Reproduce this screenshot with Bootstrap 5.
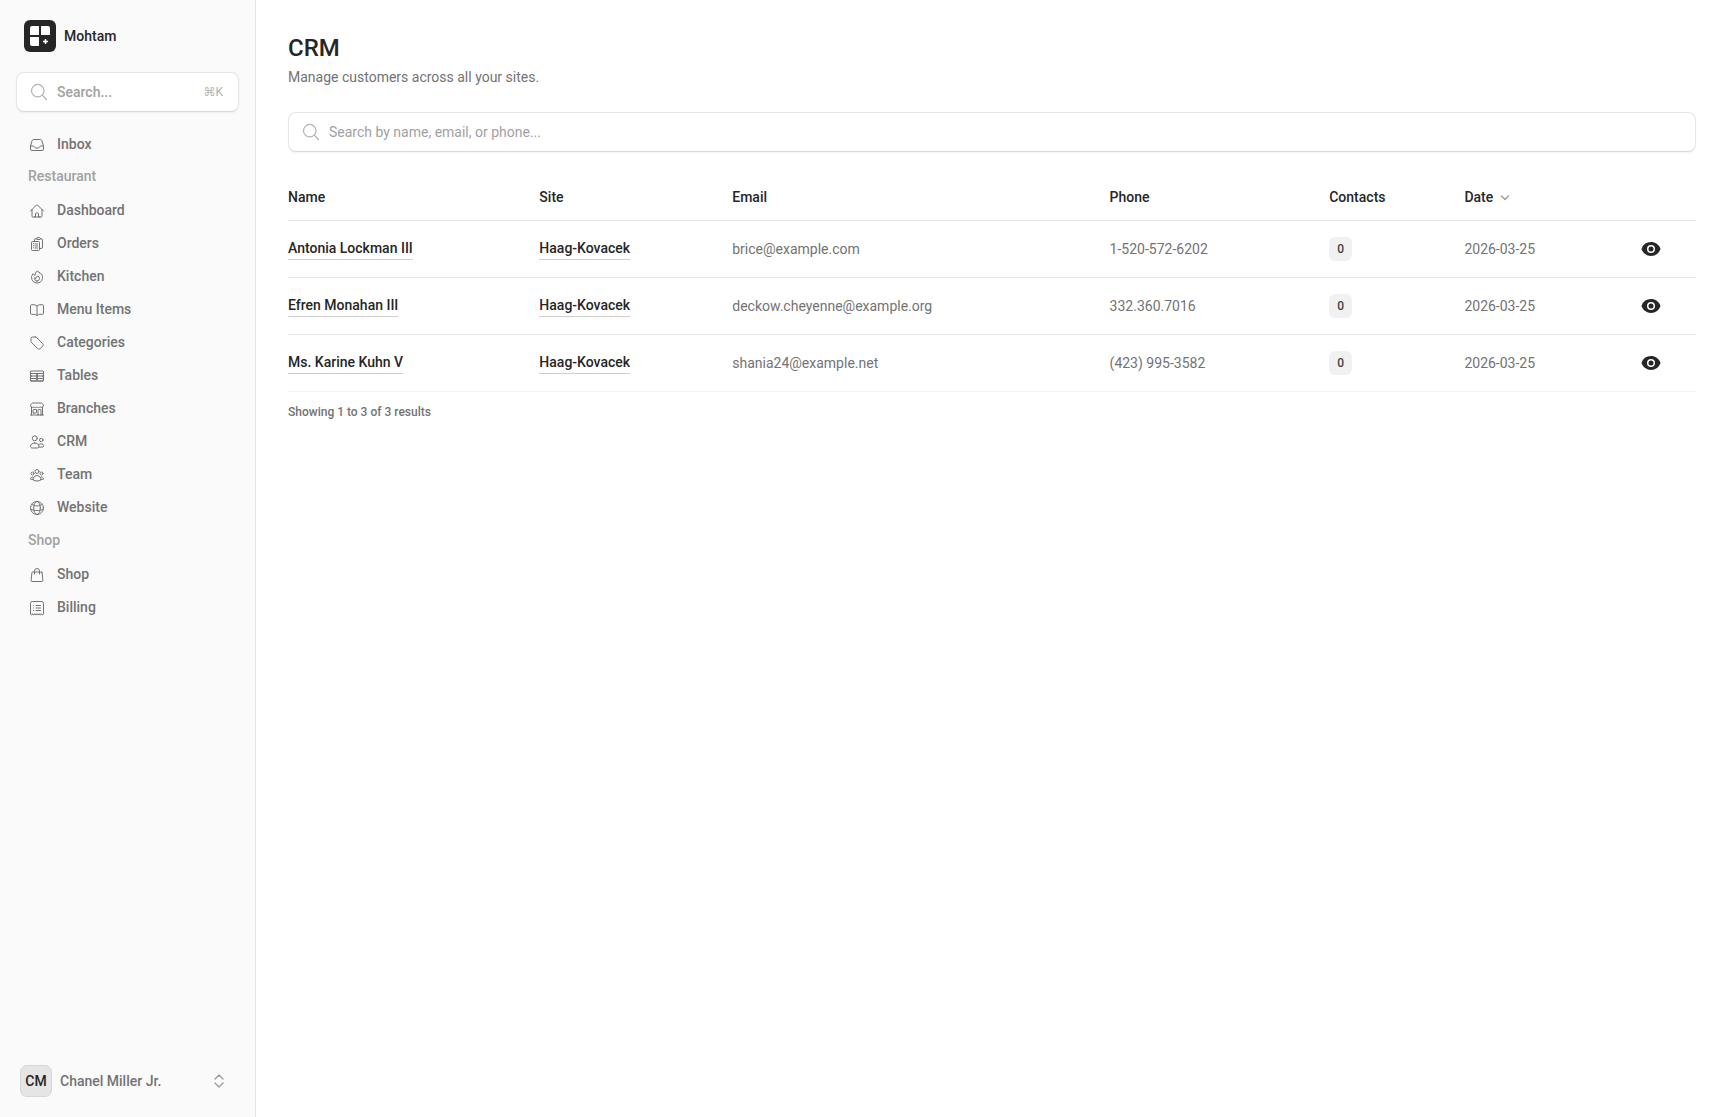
<!DOCTYPE html>
<html lang="en">
<head>
<meta charset="utf-8">
<meta name="viewport" content="width=device-width, initial-scale=1">
<title>CRM - Mohtam</title>
<link href="https://cdn.jsdelivr.net/npm/bootstrap@5.3.0/dist/css/bootstrap.min.css" rel="stylesheet">
<style>
  :root { --ink: #262626; --muted: #737373; --faint: #a1a1a1; --line: #e5e5e5; }
  body { font-family: Roboto, "Noto Sans", sans-serif; font-size: 14px; line-height: 20px; color: var(--ink); background: #fff; }
  svg { display: block; flex-shrink: 0; }
  .stroke-icon { fill: none; stroke: currentColor; stroke-width: 1.5; stroke-linecap: round; stroke-linejoin: round; }
  .app-sidebar { width: 256px; background: #fafafa; border-right: 1px solid var(--line); }
  .brand-link { color: var(--ink); height: 32px; margin: 4px 8px 20px; }
  .search-box { height: 40px; border: 1px solid var(--line); border-bottom-color: #d9d9d9; border-radius: 8px; background: #fff; color: var(--faint); box-shadow: 0 1px 2px rgba(0,0,0,.05); padding: 0 15px 0 12px; gap: 8px; }
  .search-box input { color: var(--ink); outline: 0; }
  .search-box input::placeholder { color: var(--faint); opacity: 1; }
  .search-box svg { color: #b3b3b3; }
  .quick-search { margin-bottom: 16px; }
  .quick-search kbd { font: 400 12px/20px Roboto, "DejaVu Sans", sans-serif; background: none; color: #b3b3b3; padding: 0; }
  .side-link { height: 32px; padding: 0 13px; gap: 12px; color: var(--muted); border-radius: 8px; }
  .side-link:hover { background: #f0f0f0; color: var(--ink); }
  .side-link svg { margin-top: 2px; }
  .side-label { padding: 6px 12px; color: var(--faint); }
  .side-items { gap: 1px; padding-top: 2px; padding-bottom: 1px; }
  .user-button { padding: 4px; gap: 8px; color: var(--muted); border-radius: 8px; font-size: 14px; line-height: 20px; font-weight: 500; }
  .user-initials { width: 32px; height: 32px; border: 1px solid #d6d6d6; border-radius: 7px; background: var(--line); color: var(--ink); }
  .app-main { padding: 32px; min-width: 0; }
  .page-title { font-size: 24px; line-height: 32px; margin-bottom: 3px; }
  .page-intro { margin-bottom: 25px; }
  .text-soft { color: var(--muted); }
  .crm-table { --bs-table-bg: transparent; table-layout: fixed; margin: 24px 0 0; color: var(--muted); border-color: var(--line); }
  .crm-table > :not(caption) > * > * { padding: 0 12px; height: 57px; vertical-align: middle; border-bottom: 1px solid var(--line); }
  .crm-table > thead > tr > th { height: 44px; padding-bottom: 1px; font-weight: 500; color: var(--ink); }
  .crm-table > :not(caption) > * > :first-child { padding-left: 0; }
  .crm-table > tbody > tr:last-child > td { border-bottom-color: #f3f3f3; }
  .row-link { display: inline-block; color: var(--ink); border-bottom: 1px solid #cfcfcf; line-height: 22px; }
  .count-pill { display: inline-block; min-width: 23px; height: 24px; padding: 2px 8px; border-radius: 6px; background: #f1f1f1; color: #404040; font-size: 12px; vertical-align: middle; }
  .view-button { color: var(--ink); width: 32px; height: 32px; }
  .results-note { font-size: 12px; line-height: 16px; margin-top: 12px; }
</style>
</head>
<body>
<svg class="d-none" aria-hidden="true">
  <symbol id="icon-eye" viewBox="0 0 20 20"><path d="M10 12.5a2.5 2.5 0 1 0 0-5 2.5 2.5 0 0 0 0 5Z"/><path fill-rule="evenodd" d="M.664 10.59a1.651 1.651 0 0 1 0-1.186A10.004 10.004 0 0 1 10 3c4.257 0 7.893 2.66 9.336 6.41.147.381.146.804 0 1.186A10.004 10.004 0 0 1 10 17c-4.257 0-7.893-2.66-9.336-6.41ZM14 10a4 4 0 1 1-8 0 4 4 0 0 1 8 0Z"/></symbol>
  <symbol id="icon-search" viewBox="0 0 24 24"><path d="m21 21-5.197-5.197m0 0A7.5 7.5 0 1 0 5.196 5.196a7.5 7.5 0 0 0 10.607 10.607Z"/></symbol>
</svg>
<div class="d-flex min-vh-100">
  <aside class="app-sidebar d-flex flex-column flex-shrink-0 p-3 fw-medium">
    <a href="#" class="brand-link d-flex align-items-center gap-2 text-decoration-none">
      <svg width="32" height="32" viewBox="0 0 32 32" aria-hidden="true">
        <rect width="32" height="32" rx="6" fill="#262626"/>
        <g fill="#fff"><path d="M8 6h7v9H6V8a2 2 0 0 1 2-2ZM17 6h7a2 2 0 0 1 2 2v7h-9ZM6 17h9v9H8a2 2 0 0 1-2-2ZM21.5 19l.8 1.7 1.7.8-1.7.8-.8 1.7-.8-1.7-1.7-.8 1.7-.8Z"/><path d="M20.8 19h1.4v5h-1.4zM19 20.8h5v1.4h-5z"/></g>
      </svg>
      <span>Mohtam</span>
    </a>
    <div class="search-box quick-search d-flex align-items-center">
      <svg class="stroke-icon" width="20" height="20"><use href="#icon-search"/></svg>
      <input type="search" class="border-0 bg-transparent p-0 flex-grow-1 w-50 fw-medium" placeholder="Search..." aria-label="Search">
      <kbd>⌘K</kbd>
    </div>
    <nav class="d-flex flex-column" aria-label="Main">
      <a href="#" class="side-link d-flex align-items-center text-decoration-none"><svg class="stroke-icon" width="16" height="16" viewBox="0 0 24 24"><path d="M2.25 13.5h3.86a2.25 2.25 0 0 1 2.012 1.244l.256.512a2.25 2.25 0 0 0 2.013 1.244h3.218a2.25 2.25 0 0 0 2.013-1.244l.256-.512a2.25 2.25 0 0 1 2.013-1.244h3.859m-19.5.338V18a2.25 2.25 0 0 0 2.25 2.25h15A2.25 2.25 0 0 0 21.75 18v-4.162c0-.224-.034-.447-.1-.661L19.24 5.338a2.25 2.25 0 0 0-2.15-1.588H6.911a2.25 2.25 0 0 0-2.15 1.588L2.35 13.177a2.25 2.25 0 0 0-.1.661Z"/></svg><span>Inbox</span></a>
      <div class="side-label">Restaurant</div>
      <div class="side-items d-flex flex-column">
        <a href="#" class="side-link d-flex align-items-center text-decoration-none"><svg class="stroke-icon" width="16" height="16" viewBox="0 0 24 24"><path d="m2.25 12 8.954-8.955c.44-.439 1.152-.439 1.591 0L21.75 12M4.5 9.75v10.125c0 .621.504 1.125 1.125 1.125H9.75v-4.875c0-.621.504-1.125 1.125-1.125h2.25c.621 0 1.125.504 1.125 1.125V21h4.125c.621 0 1.125-.504 1.125-1.125V9.75M8.25 21h8.25"/></svg><span>Dashboard</span></a>
        <a href="#" class="side-link d-flex align-items-center text-decoration-none"><svg class="stroke-icon" width="16" height="16" viewBox="0 0 24 24"><path d="M9 12h3.75M9 15h3.75M9 18h3.75m3 .75H18a2.25 2.25 0 0 0 2.25-2.25V6.108c0-1.135-.845-2.098-1.976-2.192a48.424 48.424 0 0 0-1.123-.08m-5.801 0c-.065.21-.1.433-.1.664 0 .414.336.75.75.75h4.5a.75.75 0 0 0 .75-.75 2.25 2.25 0 0 0-.1-.664m-5.8 0A2.251 2.251 0 0 1 13.5 2.25H15c1.012 0 1.867.668 2.15 1.586m-5.8 0c-.376.023-.75.05-1.124.08C9.095 4.01 8.25 4.973 8.25 6.108V8.25m0 0H4.875c-.621 0-1.125.504-1.125 1.125v11.25c0 .621.504 1.125 1.125 1.125h9.75c.621 0 1.125-.504 1.125-1.125V9.375c0-.621-.504-1.125-1.125-1.125H8.25ZM6.75 12h.008v.008H6.75V12Zm0 3h.008v.008H6.75V15Zm0 3h.008v.008H6.75V18Z"/></svg><span>Orders</span></a>
        <a href="#" class="side-link d-flex align-items-center text-decoration-none"><svg class="stroke-icon" width="16" height="16" viewBox="0 0 24 24"><path d="M15.362 5.214A8.252 8.252 0 0 1 12 21 8.25 8.25 0 0 1 6.038 7.047 8.287 8.287 0 0 0 9 9.601a8.983 8.983 0 0 1 3.361-6.867 8.21 8.21 0 0 0 3 2.48Z"/><path d="M12 18a3.75 3.75 0 0 0 .495-7.468 5.99 5.99 0 0 0-1.925 3.547 5.975 5.975 0 0 1-2.133-1.001A3.75 3.75 0 0 0 12 18Z"/></svg><span>Kitchen</span></a>
        <a href="#" class="side-link d-flex align-items-center text-decoration-none"><svg class="stroke-icon" width="16" height="16" viewBox="0 0 24 24"><path d="M12 5.6C10.500 4.500 8.500 4.100 6 4.100H3.750A1.500 1.500 0 0 0 2.250 5.600V17a1.500 1.500 0 0 0 1.500 1.500H8c1.700 0 3 .6 4 1.800M12 5.600c1.500-1.100 3.500-1.500 6-1.500h2.250a1.500 1.500 0 0 1 1.500 1.500V17a1.500 1.500 0 0 1-1.500 1.500H16c-1.700 0-3 .6-4 1.800M12 5.600v14.700"/></svg><span>Menu Items</span></a>
        <a href="#" class="side-link d-flex align-items-center text-decoration-none"><svg class="stroke-icon" width="16" height="16" viewBox="0 0 24 24"><path d="M9.568 3H5.25A2.25 2.25 0 0 0 3 5.25v4.318c0 .597.237 1.17.659 1.591l9.581 9.581c.699.699 1.78.872 2.607.33a18.095 18.095 0 0 0 5.223-5.223c.542-.827.369-1.908-.33-2.607L11.16 3.66A2.25 2.25 0 0 0 9.568 3Z"/></svg><span>Categories</span></a>
        <a href="#" class="side-link d-flex align-items-center text-decoration-none"><svg class="stroke-icon" width="16" height="16" viewBox="0 0 24 24"><path d="M3.375 19.5h17.25m-17.25 0a1.125 1.125 0 0 1-1.125-1.125M3.375 19.5h7.5c.621 0 1.125-.504 1.125-1.125m-9.75 0V5.625m0 12.75v-1.5c0-.621.504-1.125 1.125-1.125m18.375 2.625V5.625m0 12.75c0 .621-.504 1.125-1.125 1.125m1.125-1.125v-1.5c0-.621-.504-1.125-1.125-1.125m0 3.75h-7.5A1.125 1.125 0 0 1 12 18.375m9.75-12.75c0-.621-.504-1.125-1.125-1.125H3.375c-.621 0-1.125.504-1.125 1.125m19.5 0v1.5c0 .621-.504 1.125-1.125 1.125M2.25 5.625v1.5c0 .621.504 1.125 1.125 1.125m0 0h17.25m-17.25 0h7.5c.621 0 1.125.504 1.125 1.125M3.375 8.25c-.621 0-1.125.504-1.125 1.125v1.5c0 .621.504 1.125 1.125 1.125m17.25-3.75h-7.5c-.621 0-1.125.504-1.125 1.125m8.625-1.125c.621 0 1.125.504 1.125 1.125v1.5c0 .621-.504 1.125-1.125 1.125m-17.25 0h7.5m-7.5 0c-.621 0-1.125.504-1.125 1.125v1.5c0 .621.504 1.125 1.125 1.125M12 10.875v-1.5m0 1.5c0 .621-.504 1.125-1.125 1.125M12 10.875c0 .621.504 1.125 1.125 1.125m-2.25 0c.621 0 1.125.504 1.125 1.125M13.125 12h7.5m-7.5 0c-.621 0-1.125.504-1.125 1.125M20.625 12c.621 0 1.125.504 1.125 1.125v1.5c0 .621-.504 1.125-1.125 1.125m-17.25 0h7.5M12 14.625v-1.5m0 1.5c0 .621-.504 1.125-1.125 1.125M12 14.625c0 .621.504 1.125 1.125 1.125m-2.25 0c.621 0 1.125.504 1.125 1.125m0 1.5v-1.5m0 0c0-.621.504-1.125 1.125-1.125m0 0h7.5"/></svg><span>Tables</span></a>
        <a href="#" class="side-link d-flex align-items-center text-decoration-none"><svg class="stroke-icon" width="16" height="16" viewBox="0 0 24 24"><path d="M13.5 21v-7.5a.75.75 0 0 1 .75-.75h3a.75.75 0 0 1 .75.75V21m-4.5 0H2.36m11.14 0H18m0 0h3.64m-1.39 0V9.349M3.75 21V9.349m0 0a3.001 3.001 0 0 0 3.75-.615A2.993 2.993 0 0 0 9.75 9.75c.896 0 1.7-.393 2.25-1.016a2.993 2.993 0 0 0 2.25 1.016c.896 0 1.7-.393 2.25-1.015a3.001 3.001 0 0 0 3.75.614m-16.5 0a3.004 3.004 0 0 1-.621-4.72l1.189-1.19A1.5 1.5 0 0 1 5.378 3h13.243a1.5 1.5 0 0 1 1.06.44l1.19 1.189a3 3 0 0 1-.621 4.72M6.75 18h3.75a.75.75 0 0 0 .75-.75V13.5a.75.75 0 0 0-.75-.75H6.75a.75.75 0 0 0-.75.75v3.75c0 .414.336.75.75.75Z"/></svg><span>Branches</span></a>
        <a href="#" class="side-link d-flex align-items-center text-decoration-none"><svg class="stroke-icon" width="16" height="16" viewBox="0 0 24 24"><path d="M12.4 6.5a3.75 3.75 0 1 1-7.500 0 3.750 3.750 0 0 1 7.500 0ZM21 9a2.600 2.600 0 1 1-5.200 0A2.600 2.600 0 0 1 21 9ZM8.600 13.500c-3.600 0-6.350 2.200-6.350 5 0 1.500 1 2.500 2.600 2.500h7.600c1.600 0 2.550-1 2.550-2.500 0-2.800-2.800-5-6.400-5ZM14.500 15.800c1-.7 2.300-1 3.600-1 2.200 0 3.900 1.300 3.900 3 0 1.100-.8 1.900-2 1.900h-5"/></svg><span>CRM</span></a>
        <a href="#" class="side-link d-flex align-items-center text-decoration-none"><svg class="stroke-icon" width="16" height="16" viewBox="0 0 24 24"><path d="M18 18.72a9.094 9.094 0 0 0 3.741-.479 3 3 0 0 0-4.682-2.72m.94 3.198.001.031c0 .225-.012.447-.037.666A11.944 11.944 0 0 1 12 21c-2.17 0-4.207-.576-5.963-1.584A6.062 6.062 0 0 1 6 18.719m12 0a5.971 5.971 0 0 0-.941-3.197m0 0A5.995 5.995 0 0 0 12 12.75a5.995 5.995 0 0 0-5.058 2.772m0 0a3 3 0 0 0-4.681 2.72 8.986 8.986 0 0 0 3.74.477m.94-3.197a5.971 5.971 0 0 0-.94 3.197M15 6.75a3 3 0 1 1-6 0 3 3 0 0 1 6 0Zm6 3a2.25 2.25 0 1 1-4.5 0 2.25 2.25 0 0 1 4.5 0Zm-13.5 0a2.25 2.25 0 1 1-4.5 0 2.25 2.25 0 0 1 4.5 0Z"/></svg><span>Team</span></a>
        <a href="#" class="side-link d-flex align-items-center text-decoration-none"><svg class="stroke-icon" width="16" height="16" viewBox="0 0 24 24"><circle cx="12" cy="12" r="9.75"/><ellipse cx="12" cy="12" rx="5" ry="9.75"/><path d="M4.500 6.500C6.500 8 9 8.800 12 8.800s5.500-.8 7.500-2.300M2.600 14c2.700 1.200 6 1.800 9.400 1.800s6.700-.6 9.400-1.800"/></svg><span>Website</span></a>
      </div>
      <div class="side-label">Shop</div>
      <div class="side-items d-flex flex-column">
        <a href="#" class="side-link d-flex align-items-center text-decoration-none"><svg class="stroke-icon" width="16" height="16" viewBox="0 0 24 24"><path d="M15.75 10.5V6a3.75 3.75 0 1 0-7.5 0v4.5m11.356-1.993 1.263 12c.07.665-.45 1.243-1.119 1.243H4.25a1.125 1.125 0 0 1-1.12-1.243l1.264-12A1.125 1.125 0 0 1 5.513 7.5h12.974c.576 0 1.059.435 1.119 1.007Z"/></svg><span>Shop</span></a>
        <a href="#" class="side-link d-flex align-items-center text-decoration-none"><svg class="stroke-icon" width="16" height="16" viewBox="0 0 24 24"><path d="M2.25 20.5V5.25a3 3 0 0 1 3-3h13.5a3 3 0 0 1 3 3V20.5a1.6 1.6 0 0 1-3.25 0 1.6 1.6 0 0 1-3.25 0 1.6 1.6 0 0 1-3.25 0 1.6 1.6 0 0 1-3.25 0 1.6 1.6 0 0 1-3.25 0 1.6 1.6 0 0 1-3.25 0M10.5 8.25h6.75M10.5 12h6.75M10.5 15.75h6.75M6.75 8.25h.1M6.75 12h.1M6.75 15.75h.1"/></svg><span>Billing</span></a>
      </div>
    </nav>
    <button type="button" class="user-button btn border-0 d-flex align-items-center mt-auto w-100">
      <span class="user-initials d-flex align-items-center justify-content-center">CM</span>
      <span class="flex-grow-1 text-start">Chanel Miller Jr.</span>
      <svg class="stroke-icon me-2" width="16" height="16" viewBox="0 0 16 16" color="#a1a1a1" aria-hidden="true"><path d="m4 6 4-4 4 4M4 10l4 4 4-4"/></svg>
    </button>
  </aside>

  <main class="app-main flex-grow-1">
    <h1 class="page-title fw-medium">CRM</h1>
    <p class="page-intro text-soft">Manage customers across all your sites.</p>
    <div class="search-box d-flex align-items-center">
      <svg class="stroke-icon" width="20" height="20"><use href="#icon-search"/></svg>
      <input type="search" class="border-0 bg-transparent p-0 flex-grow-1" placeholder="Search by name, email, or phone..." aria-label="Search customers">
    </div>
    <table class="table crm-table">
      <colgroup><col style="width:17%"><col style="width:13.7%"><col style="width:26.8%"><col style="width:15.6%"><col style="width:9.6%"><col style="width:12.1%"><col></colgroup>
      <thead>
        <tr><th scope="col">Name</th><th scope="col">Site</th><th scope="col">Email</th><th scope="col">Phone</th><th scope="col">Contacts</th>
          <th scope="col"><button type="button" class="border-0 bg-transparent p-0 fw-medium d-flex align-items-center gap-1 text-reset">Date <svg class="stroke-icon" width="16" height="16" viewBox="0 0 16 16" color="#a1a1a1"><path d="m4.5 7 3.5 3.5L11.5 7"/></svg></button></th>
          <th scope="col" aria-label="Actions"></th></tr>
      </thead>
      <tbody>
        <tr><td><a href="#" class="row-link fw-medium text-decoration-none">Antonia Lockman III</a></td><td><a href="#" class="row-link fw-medium text-decoration-none">Haag-Kovacek</a></td><td>brice@example.com</td><td>1-520-572-6202</td><td><span class="count-pill fw-medium">0</span></td><td>2026-03-25</td>
          <td><button type="button" class="view-button btn border-0 p-0 d-flex align-items-center justify-content-center" aria-label="View"><svg width="20" height="20" fill="currentColor"><use href="#icon-eye"/></svg></button></td></tr>
        <tr><td><a href="#" class="row-link fw-medium text-decoration-none">Efren Monahan III</a></td><td><a href="#" class="row-link fw-medium text-decoration-none">Haag-Kovacek</a></td><td>deckow.cheyenne@example.org</td><td>332.360.7016</td><td><span class="count-pill fw-medium">0</span></td><td>2026-03-25</td>
          <td><button type="button" class="view-button btn border-0 p-0 d-flex align-items-center justify-content-center" aria-label="View"><svg width="20" height="20" fill="currentColor"><use href="#icon-eye"/></svg></button></td></tr>
        <tr><td><a href="#" class="row-link fw-medium text-decoration-none">Ms. Karine Kuhn V</a></td><td><a href="#" class="row-link fw-medium text-decoration-none">Haag-Kovacek</a></td><td>shania24@example.net</td><td>(423) 995-3582</td><td><span class="count-pill fw-medium">0</span></td><td>2026-03-25</td>
          <td><button type="button" class="view-button btn border-0 p-0 d-flex align-items-center justify-content-center" aria-label="View"><svg width="20" height="20" fill="currentColor"><use href="#icon-eye"/></svg></button></td></tr>
      </tbody>
    </table>
    <p class="results-note text-soft fw-medium mb-0">Showing 1 to 3 of 3 results</p>
  </main>
</div>
<script src="https://cdn.jsdelivr.net/npm/bootstrap@5.3.0/dist/js/bootstrap.bundle.min.js"></script>
</body>
</html>
